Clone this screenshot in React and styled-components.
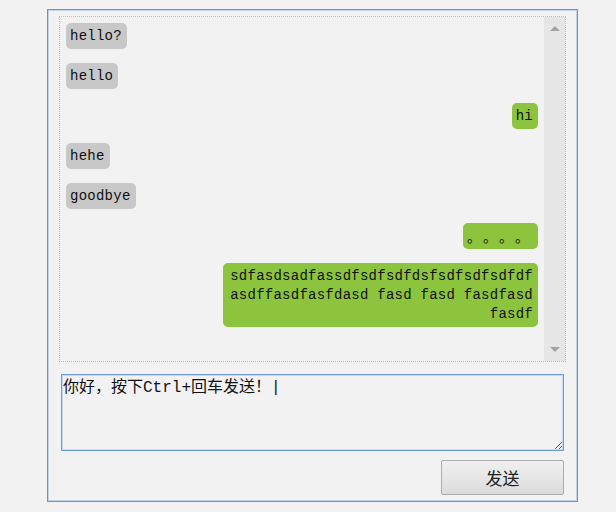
import React from 'react'
import styled, { createGlobalStyle } from 'styled-components'

const GlobalStyle = createGlobalStyle`
  html, body {
    margin: 0;
    padding: 0;
    background: #f2f2f2;
  }
  body {
    font-family: "Liberation Mono", "Noto Sans CJK SC", monospace;
  }
`;

const Page = styled.div`
  width: 616px;
  height: 512px;
  padding: 9px 0 0 47px;
  box-sizing: border-box;
`;

const Panel = styled.div`
  width: 531px;
  height: 493px;
  box-sizing: border-box;
  border: 1px solid #7393bb;
  box-shadow: inset 0 0 0 1px #c4d2e4;
  padding: 6px 11px 6px 11px;
  display: flex;
  flex-direction: column;
`;

const ChatBox = styled.div`
  height: 346px;
  box-sizing: border-box;
  border: 1px dotted #bdbdbd;
  display: flex;
`;

const Messages = styled.div`
  flex: 1;
  display: flex;
  flex-direction: column;
  gap: 14px;
  padding: 6px 6px 0 6px;
  overflow: hidden;
`;

const Bubble = styled.div`
  align-self: ${p => (p.$mine ? 'flex-end' : 'flex-start')};
  background: ${p => (p.$mine ? '#8dc43d' : '#c8c8c8')};
  color: #111;
  border-radius: 5px;
  padding: ${p => (p.$dots ? '4px 0 3px 4px' : '4px 5px 3px 4px')};
  font-family: ${p =>
    p.$dots
      ? '"Noto Sans CJK SC", sans-serif'
      : '"Liberation Mono", "Noto Sans CJK SC", monospace'};
  font-size: 14px;
  line-height: 19px;
  white-space: pre-line;
  text-align: right;
  width: ${p => (p.$wide ? '315px' : 'auto')};
  box-sizing: border-box;
  letter-spacing: ${p => (p.$dots ? '9px' : '0.25px')};
`;

const ScrollTrack = styled.div`
  width: 21px;
  background: #e6e6e6;
  display: flex;
  flex-direction: column;
  justify-content: space-between;
  align-items: center;
  padding: 9px 0 9px;
`;

const Arrow = styled.div`
  width: 0;
  height: 0;
  border-left: 5px solid transparent;
  border-right: 5px solid transparent;
  ${p =>
    p.$down
      ? 'border-top: 5px solid #a3a3a3;'
      : 'border-bottom: 5px solid #a3a3a3;'}
`;

const Input = styled.textarea`
  margin: 12px 2px 0 2px;
  height: 77px;
  box-sizing: border-box;
  border: 1px solid #6f9ae0;
  box-shadow: inset 0 0 0 1px #c6d8f3;
  background: #f2f2f2;
  padding: 4px 1px;
  font-family: "Liberation Mono", "Noto Sans CJK SC", monospace;
  font-size: 16px;
  line-height: 18px;
  color: #111;
  outline: none;
`;

const Footer = styled.div`
  display: flex;
  justify-content: flex-end;
  padding: 9px 2px 0 0;
`;

const SendButton = styled.button`
  width: 123px;
  height: 35px;
  border: 1px solid #acacac;
  border-radius: 2px;
  background: linear-gradient(#f0f0f0, #dcdcdc);
  font-family: "Noto Sans CJK SC", sans-serif;
  font-size: 17px;
  color: #222;
  padding: 0;
`;

const messages = [
  { text: 'hello?' },
  { text: 'hello' },
  { text: 'hi', mine: true },
  { text: 'hehe' },
  { text: 'goodbye' },
  { text: '。。。。', mine: true, dots: true },
  {
    text: 'sdfasdsadfassdfsdfsdfdsfsdfsdfsdfdf\nasdffasdfasfdasd fasd fasd fasdfasd\nfasdf',
    mine: true,
    wide: true,
  },
]

export default function App() {
  return (
    <>
      <GlobalStyle />
      <Page>
        <Panel>
          <ChatBox>
            <Messages>
              {messages.map((m, i) => (
                <Bubble key={i} $mine={m.mine} $wide={m.wide} $dots={m.dots}>
                  {m.text}
                </Bubble>
              ))}
            </Messages>
            <ScrollTrack>
              <Arrow />
              <Arrow $down />
            </ScrollTrack>
          </ChatBox>
          <Input defaultValue="你好，按下Ctrl+回车发送！|" />
          <Footer>
            <SendButton>发送</SendButton>
          </Footer>
        </Panel>
      </Page>
    </>
  )
}
